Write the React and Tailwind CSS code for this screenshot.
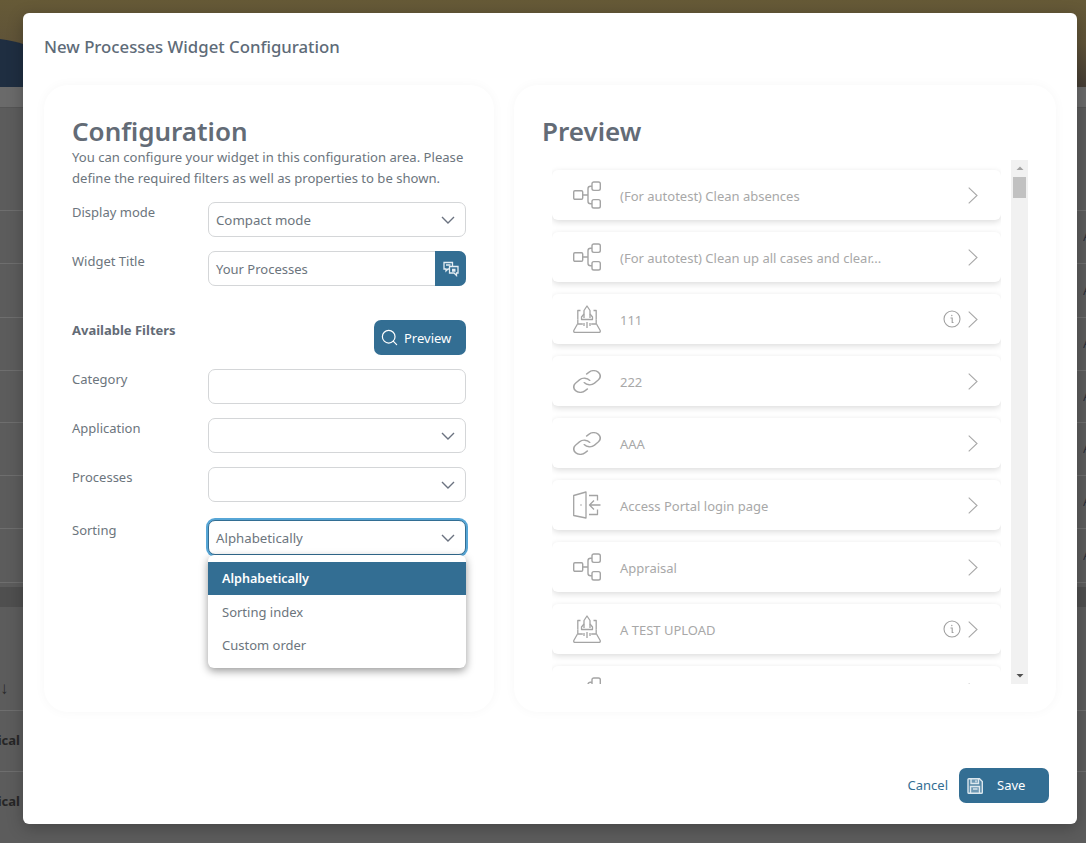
import React from "react";
import { Search } from "lucide-react";

const blue = "bg-[#336e93]";

const ProcessIcon = () => (
  <svg width="28" height="28" viewBox="0 0 28 28" fill="none" stroke="currentColor" strokeWidth="1.4">
    <rect x="0.7" y="9.7" width="9" height="8.6" rx="1.2" />
    <rect x="19" y="1" width="8.3" height="8.4" rx="1.8" />
    <rect x="19" y="18.6" width="8.3" height="8.4" rx="1.8" />
    <path d="M9.7 14h5.3M19 5.2h-1.5a2.5 2.5 0 0 0-2.5 2.5v12.6a2.5 2.5 0 0 0 2.5 2.5H19" />
  </svg>
);

const RocketIcon = () => (
  <svg width="28" height="28" viewBox="0 0 28 28" fill="none" stroke="currentColor" strokeWidth="1.3" strokeLinejoin="round">
    <path d="M11 13V5.500L14 1l3 4.500V13" />
    <path d="M11 9l-2.500 3v2.500H19.500V12L17 9" />
    <path d="M7.500 5.500H4.800v9M20.500 5.500h2.700v9" />
    <path d="M4.800 14.500v4.500M23.200 14.500v4.500" />
    <path d="M4.500 19L.8 25.500q-.4 2 1.500 2h23.400q1.900 0 1.500-2L23.500 19" />
    <path d="M14 17v6M11 18v3M17 18v3" />
    <path d="M4.800 19h5M18.200 19h5" />
  </svg>
);

const LinkIcon = () => (
  <svg width="28" height="23" viewBox="1.500 1.500 21 21" preserveAspectRatio="none" fill="none" stroke="currentColor" strokeWidth="1.200" strokeLinecap="round">
    <path d="M10 13a5 5 0 0 0 7.540.540l3-3a5 5 0 0 0-7.070-7.070l-1.720 1.710" />
    <path d="M14 11a5 5 0 0 0-7.540-.540l-3 3a5 5 0 0 0 7.070 7.070l1.710-1.710" />
  </svg>
);

const DoorIcon = () => (
  <svg width="28" height="28" viewBox="0 0 28 28" fill="none" stroke="currentColor" strokeWidth="1.3" strokeLinejoin="round">
    <path d="M.7 4.500L13 1v26L.7 24.500z" />
    <circle cx="8" cy="14" r="0.8" fill="currentColor" stroke="none" />
    <path d="M16 4.500h8.500v5M16 23.500h8.500v-5M27.500 14H16.500M21 9.500L16.500 14l4.500 4.500" />
  </svg>
);

const Chevron = () => (
  <svg width="10" height="17" viewBox="0 0 10 17" fill="none" stroke="#a8a8a8" strokeWidth="1.1" className="shrink-0">
    <path d="M.7.7l8.300 7.800-8.300 7.800" />
  </svg>
);

const InfoIcon = () => (
  <svg width="18" height="18" viewBox="0 0 18 18" fill="none" stroke="#a0a0a0" strokeWidth="1.1" className="shrink-0">
    <circle cx="9" cy="9" r="8" />
    <path d="M7.500 8h1.700v4.500h1.300" />
    <circle cx="8.800" cy="5.500" r="0.7" fill="#a0a0a0" stroke="none" />
  </svg>
);

const TranslateIcon = () => (
  <svg width="16" height="16" viewBox="0 0 16 16" fill="none" stroke="#e4edf3" strokeWidth="1.3">
    <path d="M1 1.500h8.500v6.500H5L3 10V8H1z" fill="#336e93" />
    <path d="M6.500 5.500H15V12h-1.500v2.500L11 12H6.500z" fill="#336e93" />
    <path d="M3 4h4.500M9 8.500h3.500M9 10h3.500" />
  </svg>
);

const SaveIcon = () => (
  <svg width="16" height="16" viewBox="0 0 16 16" fill="#dce7ee" fillOpacity="0.2" stroke="#dce7ee" strokeWidth="1.400">
    <path d="M1 1.500a.8.800 0 0 1 .8-.8h10.700L15.300 3.500v11a.8.800 0 0 1-.8.800H1.800a.8.800 0 0 1-.8-.8z" />
    <path d="M4 1v4.500h7.500V1M9 2.200v2" />
    <path d="M3.500 15V8.500h9V15" />
    <path d="M6 11h4.500" />
  </svg>
);

const Caret = () => (
  <svg width="14" height="8" viewBox="0 0 14 8" fill="none" stroke="#6b7280" strokeWidth="1.4">
    <path d="M1 1l6 6 6-6" />
  </svg>
);

const items = [
  { name: "(For autotest) Clean absences", icon: ProcessIcon },
  { name: "(For autotest) Clean up all cases and clear...", icon: ProcessIcon },
  { name: "111", icon: RocketIcon, info: true },
  { name: "222", icon: LinkIcon },
  { name: "AAA", icon: LinkIcon },
  { name: "Access Portal login page", icon: DoorIcon },
  { name: "Appraisal", icon: ProcessIcon },
  { name: "A TEST UPLOAD", icon: RocketIcon, info: true },
  { name: "", icon: ProcessIcon },
];

function Field({ label, value, caret, className = "" }) {
  return (
    <div className={`flex ${className}`}>
      <label className="w-[136px] shrink-0 leading-[20px]">{label}</label>
      <div className="flex h-[35px] w-[258px] items-center justify-between rounded-[7px] border border-[#d4d6d8] bg-white pl-[7px] pr-[10px] leading-[20px]">
        <span className="text-[13.250px]">{value}</span>
        {caret && <Caret />}
      </div>
    </div>
  );
}

// the dimmed page behind the dialog
function Backdrop() {
  const rows = ["h-[53px]", "h-[54px]", "h-[53px]", "h-[52px]", "h-[53px]", "h-[53px]", "h-[54px]"];
  return (
    <div className="flex h-full flex-col bg-[#5c5c5c]">
      <div className="relative h-[87px] bg-gradient-to-b from-[#665a37] via-[#5f5338] to-[#453d35]">
        <svg width="1086" height="87" viewBox="0 0 1086 87" className="block">
          <path d="M0 39q14 2 23 5v43H0z" fill="#1f2e41" />
        </svg>
      </div>
      <div className="h-[20px] bg-[#6a6a6a]" />
      <div className="h-[103px] border-t border-[#555555]" />
      {rows.map((h, i) => (
        <div key={i} className={`${h} flex items-center justify-end border-t border-[#6e6e6e]`}>
          <span className="w-[3px] overflow-hidden text-[13px] text-[#2a2f3a]">A</span>
        </div>
      ))}
      <div className="h-[5px] border-t border-[#6e6e6e]" />
      <div className="h-[20px] bg-[#4f4f4f]" />
      <div className="flex h-[103px] items-center text-[#2a2a2a]">
        <span className="mt-[58px] block w-[8px] overflow-hidden text-[17px]">↓</span>
      </div>
      <div className="flex h-[61px] items-center justify-end border-t border-[#6e6e6e] pr-[1066px] text-[13px] font-bold text-[#262626]">
        <span>ical</span>
      </div>
      <div className="flex h-[61px] items-center justify-end border-t border-[#6e6e6e] pr-[1066px] text-[13px] font-bold text-[#262626]">
        <span>ical</span>
      </div>
    </div>
  );
}

export default function App() {
  return (
    <div className="relative h-[843px] w-[1086px] overflow-hidden font-['Noto_Sans',sans-serif] text-[13px] text-[#6c757d]">
      <Backdrop />

      <div className="absolute left-[23px] top-[13px] flex h-[811px] w-[1054px] flex-col rounded-[6px] bg-white px-[21px] shadow-[0_4px_16px_rgba(0,0,0,0.25)]">
        <h1 className="mt-[23px] h-[22px] text-[16.750px] leading-[22px] font-medium text-[#5e6b78]">
          New Processes Widget Configuration
        </h1>

        <div className="mt-[27px] flex gap-[20px]">
          {/* config card */}
          <section className="relative h-[627px] w-[450px] rounded-[24px] bg-white px-[28px] pt-[30px] shadow-[0_0_12px_rgba(0,0,0,0.035)]">
            <h2 className="text-[26px] leading-[32px] font-semibold text-[#636b76]">Configuration</h2>
            <p className="text-[13.100px] leading-[21px]">
              You can configure your widget in this configuration area. Please define the required filters as well as properties to be shown.
            </p>

            <Field label="Display mode" value="Compact mode" caret className="mt-[13px]" />
            <div className="mt-[14px] flex">
              <label className="w-[136px] shrink-0 leading-[20px]">Widget Title</label>
              <div className="flex h-[35px] w-[258px] items-center justify-between rounded-[7px] border border-[#d4d6d8] bg-white pl-[7px]">
                <span className="pt-[2px]">Your Processes</span>
                <button className={`-mr-px flex h-[35px] w-[31px] items-center justify-center rounded-r-[7px] ${blue}`}>
                  <TranslateIcon />
                </button>
              </div>
            </div>

            <div className="mt-[34px] flex items-start justify-between">
              <span className="pt-[1px] leading-[18px] font-bold text-[#636b76]">Available Filters</span>
              <button className={`flex h-[35px] w-[92px] items-center gap-[5px] rounded-[7px] pl-[6px] text-white ${blue}`}>
                <Search size={19} strokeWidth={1.5} />
                <span className="pt-[2px]">Preview</span>
              </button>
            </div>

            <Field label="Category" className="mt-[14px]" />
            <Field label="Application" caret className="mt-[14px]" />
            <Field label="Processes" caret className="mt-[14px]" />

            <div className="mt-[18px] flex">
              <label className="w-[136px] shrink-0 leading-[20px]">Sorting</label>
              <div className="flex h-[35px] w-[258px] items-center justify-between rounded-[7px] border border-[#336e93] bg-white pl-[7px] pr-[10px] shadow-[0_0_0_2px_#57a6d6]">
                <span className="pt-[2px] text-[13.250px]">Alphabetically</span>
                <Caret />
              </div>
            </div>

            {/* open dropdown */}
            <ul className="absolute left-[164px] top-[470px] w-[258px] rounded-[6px] bg-white py-[7px] shadow-[0_3px_8px_rgba(0,0,0,0.4)]">
              <li className={`flex h-[33px] items-center px-[14px] pt-[2px] text-[12.600px] font-semibold text-white ${blue}`}>Alphabetically</li>
              <li className="flex h-[33px] items-center px-[14px] pt-[2px]">Sorting index</li>
              <li className="flex h-[33px] items-center px-[14px] pt-[2px]">Custom order</li>
            </ul>
          </section>

          {/* preview card */}
          <section className="h-[627px] w-[542px] rounded-[24px] bg-white pl-[28px] pt-[30px] shadow-[0_0_12px_rgba(0,0,0,0.035)]">
            <h2 className="text-[26px] leading-[32px] font-semibold text-[#636b76]">Preview</h2>
            <div className="mt-[13px] flex h-[524px]">
              <div className="ml-[10px] flex h-full w-[449px] flex-col gap-[12px] overflow-hidden pt-[10px]">
                {items.map((item, i) => {
                  const Icon = item.icon;
                  return (
                    <div key={i} className="flex h-[50px] shrink-0 items-center rounded-[6px] bg-white pl-[21px] pr-[23px] shadow-[0_2px_6px_rgba(0,0,0,0.14)]">
                      <span className="flex w-[28px] shrink-0 items-center justify-center text-[#a4a4a4]">
                        <Icon />
                      </span>
                      <span className="ml-[19px] mt-[4px] flex-1 text-[#a8a8a8]">{item.name}</span>
                      {item.info && <span className="mr-[7px]"><InfoIcon /></span>}
                      <Chevron />
                    </div>
                  );
                })}
              </div>
              {/* scrollbar */}
              <div className="ml-[10px] flex h-full w-[17px] flex-col items-center bg-[#f1f1f1]">
                <svg width="8" height="17" viewBox="0 0 8 17" className="shrink-0">
                  <path d="M0.500 10L4 6.500 7.500 10z" fill="#a3a3a3" />
                </svg>
                <div className="h-[21px] w-[13px] bg-[#c1c1c1]" />
                <div className="flex-1" />
                <svg width="8" height="17" viewBox="0 0 8 17" className="shrink-0">
                  <path d="M0.500 7H7.500L4 10.500z" fill="#505050" />
                </svg>
              </div>
            </div>
          </section>
        </div>

        <div className="mt-[56px] flex items-center justify-end gap-[11px] pr-[7px]">
          <button className="text-[#336e93]">Cancel</button>
          <button className={`flex h-[35px] w-[90px] items-center rounded-[7px] pl-[8px] text-white ${blue}`}>
            <SaveIcon />
            <span className="ml-[14px]">Save</span>
          </button>
        </div>
      </div>
    </div>
  );
}
